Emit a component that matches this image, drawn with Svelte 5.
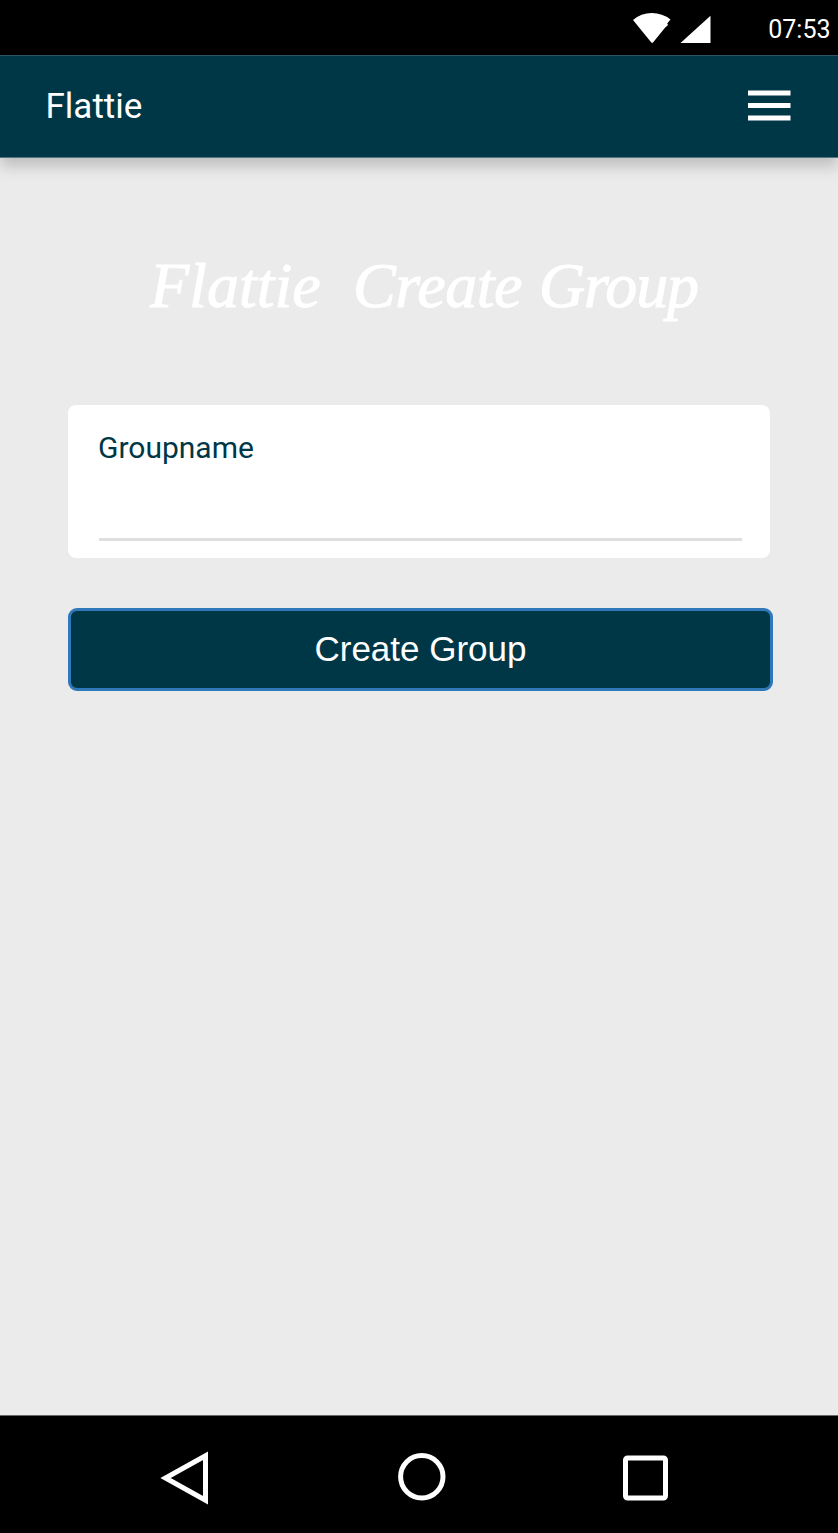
<script lang="ts">
  const bars = [0, 1, 2];
  let groupname = $state('');
</script>

<div class="phone">
  <div class="status">
    <svg class="signals" width="78" height="30" viewBox="0 0 78 30" aria-hidden="true">
      <path d="M0 7Q8 0 18.8 0Q29.5 0 37.5 6.5L34.2 10.6L35 12L32 14.8L19.8 29.8H18.5Z" fill="#fff" />
      <path d="M77.5 2.8V30H47.5Z" fill="#fff" />
    </svg>
    <span class="time">07:53</span>
  </div>

  <header>
    <span class="title">Flattie</span>
    <button class="menu" aria-label="Menu">
      <svg width="43" height="31" viewBox="0 0 43 31" fill="#fff" aria-hidden="true">
        {#each bars as bar (bar)}
          <rect x="0" y={0.5 + bar * 12.5} width="42.5" height="5" />
        {/each}
      </svg>
    </button>
  </header>

  <main>
    <h1><span class="w1">Flattie</span> <span class="w2">Create</span> <span class="w3">Group</span></h1>
    <div class="card">
      <label for="groupname">Groupname</label>
      <input id="groupname" bind:value={groupname} />
    </div>
    <button class="create">Create Group</button>
  </main>

  <nav>
    <svg width="838" height="117" viewBox="0 1416 838 117" fill="none" stroke="#fff" stroke-width="5" aria-hidden="true">
      <path d="M205.5 1455.7V1500.3L165.5 1478Z" />
      <circle cx="421.8" cy="1476.7" r="21.2" />
      <rect x="625.5" y="1458" width="40" height="40" rx="2" />
    </svg>
  </nav>
</div>

<style>
  :global(body) {
    margin: 0;
    background: #ebebeb;
  }
  .phone {
    width: 838px;
    height: 1533px;
    display: flex;
    flex-direction: column;
    overflow: hidden;
    background: #ebebeb;
    font-family: Roboto, sans-serif;
  }
  .status {
    height: 55px;
    flex: none;
    box-sizing: border-box;
    padding: 13px 7.5px 0 633px;
    display: flex;
    justify-content: space-between;
    background: #000;
    color: #fff;
  }
  .signals {
    flex: none;
  }
  .time {
    font-size: 25px;
    line-height: 34px;
  }
  header {
    height: 103px;
    flex: none;
    box-sizing: border-box;
    padding: 0 47px 0 45.5px;
    display: flex;
    align-items: center;
    justify-content: space-between;
    background: #003747;
    border-top: 1px solid #2c5661;
    border-bottom: 1px solid #55757e;
    box-shadow: 0 8px 14px rgba(0, 0, 0, 0.2);
    color: #fff;
  }
  .title {
    font-size: 35px;
    line-height: 42px;
  }
  .menu {
    width: 43px;
    height: 31px;
    margin: 0 0 3px;
    padding: 0;
    border: 0;
    background: none;
  }
  .menu svg {
    display: block;
  }
  main {
    flex: 1;
    padding: 87px 65px 0 68px;
    display: flex;
    flex-direction: column;
  }
  h1 {
    margin: 0;
    padding-left: 82px;
    height: 160px;
    display: flex;
    font: italic 400 64px/82px 'Liberation Serif', serif;
    -webkit-text-stroke: 1px #fff;
    color: #fff;
    white-space: nowrap;
  }
  .w1 {
    width: 203px;
  }
  .w2 {
    width: 186px;
    letter-spacing: -0.5px;
  }
  .w3 {
    letter-spacing: -1.2px;
  }
  .card {
    width: 702.4px;
    height: 153px;
    box-sizing: border-box;
    padding: 25px 28.4px 0 31px;
    background: #fff;
    border-radius: 8px;
    display: flex;
    flex-direction: column;
  }
  label {
    font-size: 30px;
    line-height: 35px;
    margin-left: -1px;
    color: #003747;
  }
  input {
    height: 76px;
    box-sizing: border-box;
    padding: 0;
    border: 0;
    border-bottom: 3px solid #dfdfdf;
    outline: 0;
    font: 30px Roboto, sans-serif;
    background: none;
  }
  .create {
    width: 705px;
    height: 82.5px;
    margin-top: 50px;
    padding: 0 0 0.5px;
    border: 3px solid #2f78ba;
    border-radius: 9px;
    background: #003747;
    color: #fff;
    font: 35px/40px 'Liberation Sans', sans-serif;
  }
  nav {
    height: 118px;
    flex: none;
    box-sizing: border-box;
    border-top: 1px solid #686868;
    background: #000;
  }
  nav svg {
    display: block;
  }
</style>
